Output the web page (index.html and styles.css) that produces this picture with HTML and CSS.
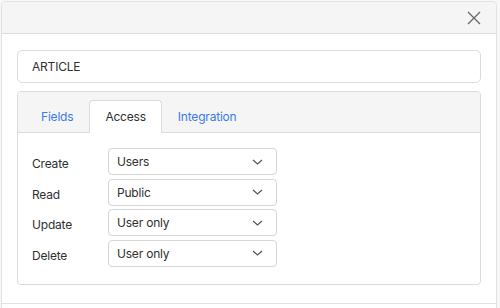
FILE: index.html
```html
<!DOCTYPE html>
<html>
<head>
<meta charset="utf-8">
<link rel="stylesheet" href="styles.css">
</head>
<body>
<div class="dialog">
  <div class="dialog-header">
    <button class="close" aria-label="Close">
      <svg width="14" height="14" viewBox="0 0 14 14"><path d="M1 1L13 13M13 1L1 13" stroke="#666" stroke-width="1.3" fill="none"/></svg>
    </button>
  </div>
  <div class="dialog-body">
    <div class="name-input">ARTICLE</div>
    <div class="panel">
      <div class="tabs">
        <div class="tab">Fields</div>
        <div class="tab active">Access</div>
        <div class="tab">Integration</div>
      </div>
      <div class="panel-body">
        <div class="row"><span class="label">Create</span><div class="select"><span>Users</span><svg class="chev" width="11" height="6" viewBox="0 0 11 6"><path d="M1 1L5.5 5L10 1" stroke="#555" stroke-width="1.2" fill="none"/></svg></div></div>
        <div class="row"><span class="label">Read</span><div class="select"><span>Public</span><svg class="chev" width="11" height="6" viewBox="0 0 11 6"><path d="M1 1L5.5 5L10 1" stroke="#555" stroke-width="1.2" fill="none"/></svg></div></div>
        <div class="row"><span class="label">Update</span><div class="select"><span>User only</span><svg class="chev" width="11" height="6" viewBox="0 0 11 6"><path d="M1 1L5.5 5L10 1" stroke="#555" stroke-width="1.2" fill="none"/></svg></div></div>
        <div class="row"><span class="label">Delete</span><div class="select"><span>User only</span><svg class="chev" width="11" height="6" viewBox="0 0 11 6"><path d="M1 1L5.5 5L10 1" stroke="#555" stroke-width="1.2" fill="none"/></svg></div></div>
      </div>
    </div>
  </div>
  <div class="dialog-footer"></div>
</div>
</body>
</html>
```
FILE: styles.css
```css
html, body {
  margin: 0;
  padding: 0;
  background: #f7f7f7;
}
body {
  font-family: Inter, "Liberation Sans", sans-serif;
  font-size: 12px;
  letter-spacing: -0.2px;
  color: #2f2f2f;
  padding: 1px 3px 0 1px;
  height: 308px;
  box-sizing: border-box;
  overflow: hidden;
}
.dialog {
  background: #fff;
  border: 1px solid #e2e2e2;
  border-bottom: 0;
  border-radius: 5px 5px 0 0;
  overflow: hidden;
  height: 307px;
  box-sizing: border-box;
}
.dialog-header {
  height: 31px;
  background: #f5f5f5;
  border-bottom: 1px solid #dedede;
  display: flex;
  justify-content: flex-end;
  align-items: center;
  padding-right: 15px;
}
.close {
  border: 0;
  background: none;
  padding: 0;
  width: 14px;
  height: 14px;
  display: flex;
}
.dialog-body {
  padding: 16px 15px 18px 15px;
  display: flex;
  flex-direction: column;
  gap: 8px;
}
.name-input {
  height: 31px;
  border: 1px solid #dcdcdc;
  border-radius: 5px;
  display: flex;
  align-items: center;
  padding-left: 14px;
}
.panel {
  border: 1px solid #dcdcdc;
  border-radius: 4px;
  overflow: hidden;
}
.tabs {
  background: #f5f5f5;
  border-bottom: 1px solid #dcdcdc;
  display: flex;
  padding: 8px 7px 0;
  height: 32px;
}
.tab {
  padding: 0 15px 1px;
  display: flex;
  align-items: center;
  color: #3b7ae8;
  border: 1px solid transparent;
  border-bottom: 0;
  border-radius: 4px 4px 0 0;
  margin-bottom: -1px;
}
.tab.active {
  background: #fff;
  border-color: #dcdcdc;
  color: #2f2f2f;
}
.panel-body {
  padding: 15px 14px 17px;
  display: flex;
  flex-direction: column;
  gap: 3.5px;
}
.row {
  display: flex;
  align-items: center;
}
.label {
  width: 76px;
  padding-top: 4px;
}
.select {
  height: 25px;
  width: 146px;
  border: 1px solid #d6d6d6;
  border-radius: 4px;
  display: flex;
  align-items: center;
  justify-content: space-between;
  padding: 0 13px 0 8px;
}
.dialog-footer {
  border-top: 1px solid #e2e2e2;
  height: 20px;
}
```
